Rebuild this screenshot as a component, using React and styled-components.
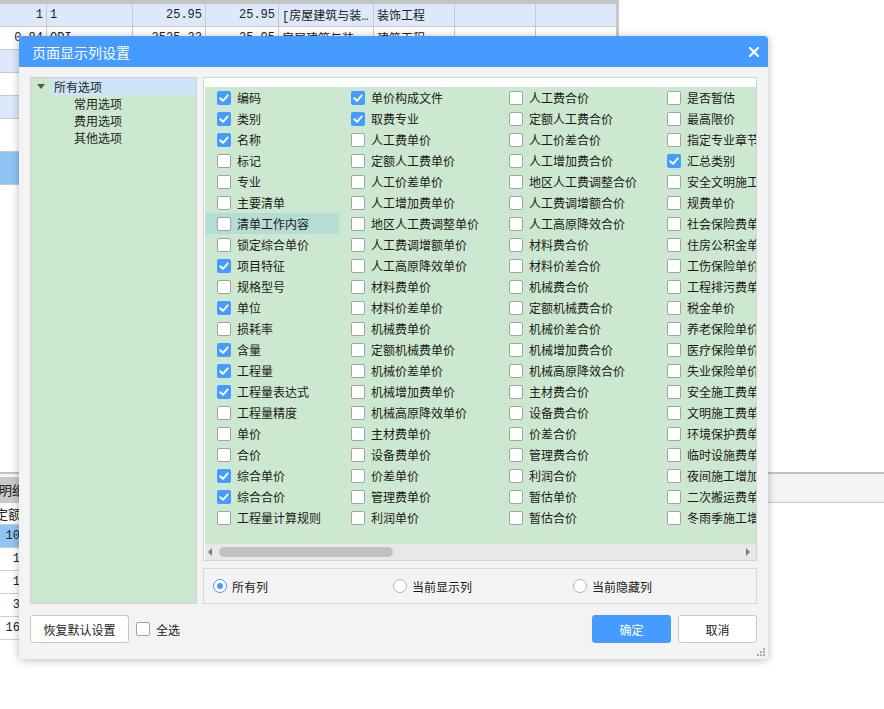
import React from "react";
import styled, { createGlobalStyle } from "styled-components";

const GlobalStyle = createGlobalStyle`
  html, body {
    margin: 0;
    padding: 0;
    background: #fff;
  }
  body {
    font-family: "Noto Sans CJK SC", "Noto Sans", sans-serif;
    font-size: 12px;
    color: #1f1f1f;
  }
`;

const Page = styled.div`
  position: relative;
  width: 884px;
  height: 709px;
  overflow: hidden;
  background: #fff;
`;

/* ---------- background sheet ---------- */
const TopPane = styled.div`
  height: 472px;
`;
const HeadStrip = styled.div`
  width: 619px;
  height: 4px;
  background: #c4c4c4;
`;
const SheetRow = styled.div`
  display: flex;
  width: 619px;
  height: ${(p) => p.h}px;
  box-sizing: border-box;
  background: ${(p) => p.bg};
  border-bottom: 1px solid #c9c9c9;
  border-right: 2px solid #c9c9c9;
`;
const SheetCell = styled.div`
  width: ${(p) => p.w}px;
  flex-shrink: 0;
  box-sizing: border-box;
  border-right: 1px solid #c9c9c9;
  padding: 0 3px;
  display: flex;
  align-items: center;
  justify-content: ${(p) => (p.right ? "flex-end" : "flex-start")};
  font-family: "Liberation Mono", "Noto Sans CJK SC", monospace;
  font-size: 12px;
  color: #222;
  white-space: nowrap;
  overflow: hidden;
`;
const BottomPane = styled.div`
  border-top: 2px solid #c0c0c0;
`;
const TabStrip = styled.div`
  height: 29px;
  box-sizing: border-box;
  background: #f3f3f3;
  border-bottom: 1px solid #c8c8c8;
  display: flex;
  align-items: flex-end;
`;
const Tab = styled.div`
  width: 60px;
  height: 25px;
  background: #c9c9c9;
  display: flex;
  align-items: center;
  font-size: 13px;
  color: #222;
  text-indent: -1px;
`;
const LowRow = styled.div`
  display: flex;
  width: 600px;
  height: ${(p) => p.h}px;
  box-sizing: border-box;
  background: ${(p) => p.bg};
  border-bottom: 1px solid #cfcfcf;
`;
const LowCell = styled.div`
  width: 56px;
  flex-shrink: 0;
  display: flex;
  align-items: center;
  justify-content: ${(p) => (p.right ? "flex-end" : "flex-start")};
  font-family: "Liberation Mono", "Noto Sans CJK SC", monospace;
  font-size: ${(p) => (p.cjk ? 13 : 12)}px;
  color: #222;
  white-space: nowrap;
  text-indent: ${(p) => (p.cjk ? -5 : 0)}px;
`;

/* ---------- dialog ---------- */
const Dialog = styled.div`
  position: absolute;
  left: 19px;
  top: 36px;
  width: 749px;
  height: 623px;
  background: #f3f3f3;
  border-radius: 4px;
  box-shadow: 0 1px 9px rgba(0, 0, 0, 0.28);
  display: flex;
  flex-direction: column;
  overflow: hidden;
`;
const TitleBar = styled.div`
  height: 31px;
  flex-shrink: 0;
  background: #459bff;
  color: #fff;
  font-size: 14px;
  padding: 0 9px 0 13px;
  display: flex;
  align-items: center;
  justify-content: space-between;
`;
const CloseBtn = styled.div`
  width: 10px;
  height: 10px;
  display: flex;
`;
const Body = styled.div`
  padding: 10px 11px 0;
  display: flex;
  flex-direction: column;
`;
const Main = styled.div`
  display: flex;
  gap: 6px;
  height: 527px;
`;
const TreePanel = styled.div`
  width: 167px;
  flex-shrink: 0;
  box-sizing: border-box;
  border: 1px solid #d2d2d2;
  background: #cde8d0;
`;
const TreeRow = styled.div`
  height: 17px;
  display: flex;
  align-items: center;
  padding-left: ${(p) => p.indent}px;
  color: #1f1f1f;
`;
const Caret = styled.div`
  width: 20px;
  height: 17px;
  display: flex;
  align-items: center;
  justify-content: center;
  padding-right: 1px;
  box-sizing: border-box;
`;
const TreeLabel = styled.div`
  flex: 1;
  height: 17px;
  line-height: 17px;
  padding-left: ${(p) => (p.selected ? 3 : 0)}px;
  background: ${(p) => (p.selected ? "#cce4f7" : "transparent")};
`;
const RightCol = styled.div`
  width: 554px;
  min-width: 0;
  display: flex;
  flex-direction: column;
  gap: 7px;
`;
const ListPanel = styled.div`
  height: 484px;
  box-sizing: border-box;
  border: 1px solid #d2d2d2;
  background: #fff;
  padding: 9px 0 0 1px;
  display: flex;
  flex-direction: column;
`;
const ListArea = styled.div`
  flex: 1;
  min-width: 0;
  background: #cde8d0;
  overflow: hidden;
  display: flex;
`;
const OptColumn = styled.div`
  width: ${(p) => p.w}px;
  flex-shrink: 0;
`;
const Option = styled.div`
  height: 21px;
  display: flex;
  align-items: center;
  gap: 6px;
  padding-left: 12px;
  background: ${(p) => (p.hl ? "#b6ddd4" : "transparent")};
  white-space: nowrap;
  color: #1a1a1a;
`;
const Box = styled.span`
  width: 14px;
  height: 14px;
  flex-shrink: 0;
  box-sizing: border-box;
  border-radius: 2px;
  background: ${(p) => (p.on ? "#459bff" : "#fff")};
  border: ${(p) => (p.on ? "none" : "1px solid #a3a3a3")};
  display: flex;
  align-items: center;
  justify-content: center;
`;
const HScroll = styled.div`
  height: 16px;
  flex-shrink: 0;
  background: #e8e8e8;
  display: flex;
  align-items: center;
`;
const Arrow = styled.span`
  width: 0;
  height: 0;
  border-top: 4px solid transparent;
  border-bottom: 4px solid transparent;
  ${(p) =>
    p.dir === "left"
      ? "border-right: 4px solid #7a7a7a; margin-left: 3px;"
      : "border-left: 4px solid #7a7a7a; margin-left: auto; margin-right: 6px;"}
`;
const Thumb = styled.span`
  width: 174px;
  height: 10px;
  margin-left: 7px;
  border-radius: 5px;
  background: #c1c1c1;
`;
const RadioPanel = styled.div`
  height: 36px;
  box-sizing: border-box;
  border: 1px solid #d8d8d8;
  display: flex;
  align-items: center;
  padding-left: 9px;
`;
const RadioItem = styled.div`
  width: 180px;
  display: flex;
  align-items: center;
  gap: 5px;
  color: #1a1a1a;
`;
const RadioDot = styled.span`
  width: 14px;
  height: 14px;
  box-sizing: border-box;
  border-radius: 50%;
  background: #fff;
  border: 1px solid ${(p) => (p.on ? "#459bff" : "#b4b4b4")};
  display: flex;
  align-items: center;
  justify-content: center;
  &::after {
    content: "";
    width: 6px;
    height: 6px;
    border-radius: 50%;
    background: ${(p) => (p.on ? "#459bff" : "transparent")};
  }
`;
const Footer = styled.div`
  margin-top: 11px;
  height: 28px;
  display: flex;
  align-items: center;
`;
const Button = styled.button`
  width: ${(p) => p.w}px;
  height: 28px;
  box-sizing: border-box;
  border-radius: 3px;
  border: 1px solid ${(p) => (p.primary ? "#459bff" : "#c8c8c8")};
  background: ${(p) => (p.primary ? "#459bff" : "#fff")};
  color: ${(p) => (p.primary ? "#fff" : "#222")};
  font-family: "Noto Sans CJK SC", "Noto Sans", sans-serif;
  font-size: 12px;
  padding: 0;
`;
const SelectAll = styled.label`
  margin-left: 7px;
  display: flex;
  align-items: center;
  gap: 6px;
  color: #1a1a1a;
`;
const Actions = styled.div`
  margin-left: auto;
  display: flex;
  gap: 7px;
`;
const Grip = styled.div`
  position: absolute;
  right: 3px;
  bottom: 3px;
  width: 8px;
  height: 8px;
  display: flex;
`;

const sheetWidths = [47, 86, 73, 73, 95, 81, 81, 81];
const sheetRows = [
  { h: 23, bg: "#dde9fb", cells: ["1", "1", "25.95", "25.95", "[房屋建筑与装…", "装饰工程", "", ""] },
  { h: 23, bg: "#fff", cells: ["0.84", "ODI", "3525.33", "25.95", "房屋建筑与装…", "建筑工程", "", ""] },
  { h: 23, bg: "#dde9fb", cells: [] },
  { h: 23, bg: "#fff", cells: [] },
  { h: 23, bg: "#dde9fb", cells: [] },
  { h: 33, bg: "#fff", cells: [] },
  { h: 33, bg: "#8fc4f5", cells: [] },
];
const rightAligned = [true, false, true, true, false, false, false, false];

const lowRows = [
  { bg: "#8fc4f5", v: "1076.64" },
  { bg: "#fff", v: "12.500" },
  { bg: "#fff", v: "16.800" },
  { bg: "#fff", v: "35.600" },
  { bg: "#fff", v: "1692.88" },
];

const columns = [
  {
    w: 134,
    items: [
      ["编码", 1], ["类别", 1], ["名称", 1], ["标记"], ["专业"], ["主要清单"],
      ["清单工作内容", 0, 1], ["锁定综合单价"], ["项目特征", 1], ["规格型号"], ["单位", 1],
      ["损耗率"], ["含量", 1], ["工程量", 1], ["工程量表达式", 1], ["工程量精度"], ["单价"],
      ["合价"], ["综合单价", 1], ["综合合价", 1], ["工程量计算规则"],
    ],
  },
  {
    w: 158,
    items: [
      ["单价构成文件", 1], ["取费专业", 1], ["人工费单价"], ["定额人工费单价"], ["人工价差单价"],
      ["人工增加费单价"], ["地区人工费调整单价"], ["人工费调增额单价"], ["人工高原降效单价"],
      ["材料费单价"], ["材料价差单价"], ["机械费单价"], ["定额机械费单价"], ["机械价差单价"],
      ["机械增加费单价"], ["机械高原降效单价"], ["主材费单价"], ["设备费单价"], ["价差单价"],
      ["管理费单价"], ["利润单价"],
    ],
  },
  {
    w: 158,
    items: [
      ["人工费合价"], ["定额人工费合价"], ["人工价差合价"], ["人工增加费合价"], ["地区人工费调整合价"],
      ["人工费调增额合价"], ["人工高原降效合价"], ["材料费合价"], ["材料价差合价"], ["机械费合价"],
      ["定额机械费合价"], ["机械价差合价"], ["机械增加费合价"], ["机械高原降效合价"], ["主材费合价"],
      ["设备费合价"], ["价差合价"], ["管理费合价"], ["利润合价"], ["暂估单价"], ["暂估合价"],
    ],
  },
  {
    w: 170,
    items: [
      ["是否暂估"], ["最高限价"], ["指定专业章节"], ["汇总类别", 1], ["安全文明施工费"], ["规费单价"],
      ["社会保险费单价"], ["住房公积金单价"], ["工伤保险单价"], ["工程排污费单价"], ["税金单价"],
      ["养老保险单价"], ["医疗保险单价"], ["失业保险单价"], ["安全施工费单价"], ["文明施工费单价"],
      ["环境保护费单价"], ["临时设施费单价"], ["夜间施工增加费"], ["二次搬运费单价"], ["冬雨季施工增加费"],
    ],
  },
];

function Check({ on }) {
  return (
    <Box on={on}>
      {on && (
        <svg width="12" height="12" viewBox="0 0 12 12">
          <path d="M2.2 6.3 L5 8.8 L9.8 3.4" fill="none" stroke="#fff" strokeWidth="2" strokeLinecap="round" strokeLinejoin="round" />
        </svg>
      )}
    </Box>
  );
}

export default function App() {
  return (
    <Page>
      <GlobalStyle />
      <TopPane>
        <HeadStrip />
        {sheetRows.map((r, i) => (
          <SheetRow key={i} h={r.h} bg={r.bg}>
            {sheetWidths.map((w, j) => (
              <SheetCell key={j} w={w} right={rightAligned[j]}>
                {r.cells[j] || ""}
              </SheetCell>
            ))}
          </SheetRow>
        ))}
      </TopPane>
      <BottomPane>
        <TabStrip>
          <Tab>明细</Tab>
        </TabStrip>
        <LowRow h={22} bg="#fafafa">
          <LowCell cjk>定额价</LowCell>
        </LowRow>
        {lowRows.map((r, i) => (
          <LowRow key={i} h={23} bg={r.bg}>
            <LowCell right>{r.v}</LowCell>
          </LowRow>
        ))}
      </BottomPane>

      <Dialog>
        <TitleBar>
          <span>页面显示列设置</span>
          <CloseBtn>
            <svg width="10" height="10" viewBox="0 0 10 10">
              <path d="M1 1 L9 9 M9 1 L1 9" stroke="#fff" strokeWidth="2.2" strokeLinecap="square" />
            </svg>
          </CloseBtn>
        </TitleBar>
        <Body>
          <Main>
            <TreePanel>
              <TreeRow indent={0}>
                <Caret>
                  <svg width="8" height="5" viewBox="0 0 8 5">
                    <path d="M0 0 L8 0 L4 5 Z" fill="#555" />
                  </svg>
                </Caret>
                <TreeLabel selected>所有选项</TreeLabel>
              </TreeRow>
              {["常用选项", "费用选项", "其他选项"].map((t) => (
                <TreeRow key={t} indent={43}>
                  <TreeLabel>{t}</TreeLabel>
                </TreeRow>
              ))}
            </TreePanel>
            <RightCol>
              <ListPanel>
                <ListArea>
                  {columns.map((c, i) => (
                    <OptColumn key={i} w={c.w}>
                      {c.items.map(([label, on, hl]) => (
                        <Option key={label} hl={!!hl}>
                          <Check on={!!on} />
                          <span>{label}</span>
                        </Option>
                      ))}
                    </OptColumn>
                  ))}
                </ListArea>
                <HScroll>
                  <Arrow dir="left" />
                  <Thumb />
                  <Arrow dir="right" />
                </HScroll>
              </ListPanel>
              <RadioPanel>
                <RadioItem>
                  <RadioDot on />
                  <span>所有列</span>
                </RadioItem>
                <RadioItem>
                  <RadioDot />
                  <span>当前显示列</span>
                </RadioItem>
                <RadioItem>
                  <RadioDot />
                  <span>当前隐藏列</span>
                </RadioItem>
              </RadioPanel>
            </RightCol>
          </Main>
          <Footer>
            <Button w={99}>恢复默认设置</Button>
            <SelectAll>
              <Check on={false} />
              <span>全选</span>
            </SelectAll>
            <Actions>
              <Button w={79} primary>确定</Button>
              <Button w={79}>取消</Button>
            </Actions>
          </Footer>
        </Body>
        <Grip>
          <svg width="8" height="8" viewBox="0 0 8 8">
            <rect x="6" y="0" width="2" height="2" fill="#a8a8a8" />
            <rect x="3" y="3" width="2" height="2" fill="#a8a8a8" />
            <rect x="6" y="3" width="2" height="2" fill="#a8a8a8" />
            <rect x="0" y="6" width="2" height="2" fill="#a8a8a8" />
            <rect x="3" y="6" width="2" height="2" fill="#a8a8a8" />
            <rect x="6" y="6" width="2" height="2" fill="#a8a8a8" />
          </svg>
        </Grip>
      </Dialog>
    </Page>
  );
}
